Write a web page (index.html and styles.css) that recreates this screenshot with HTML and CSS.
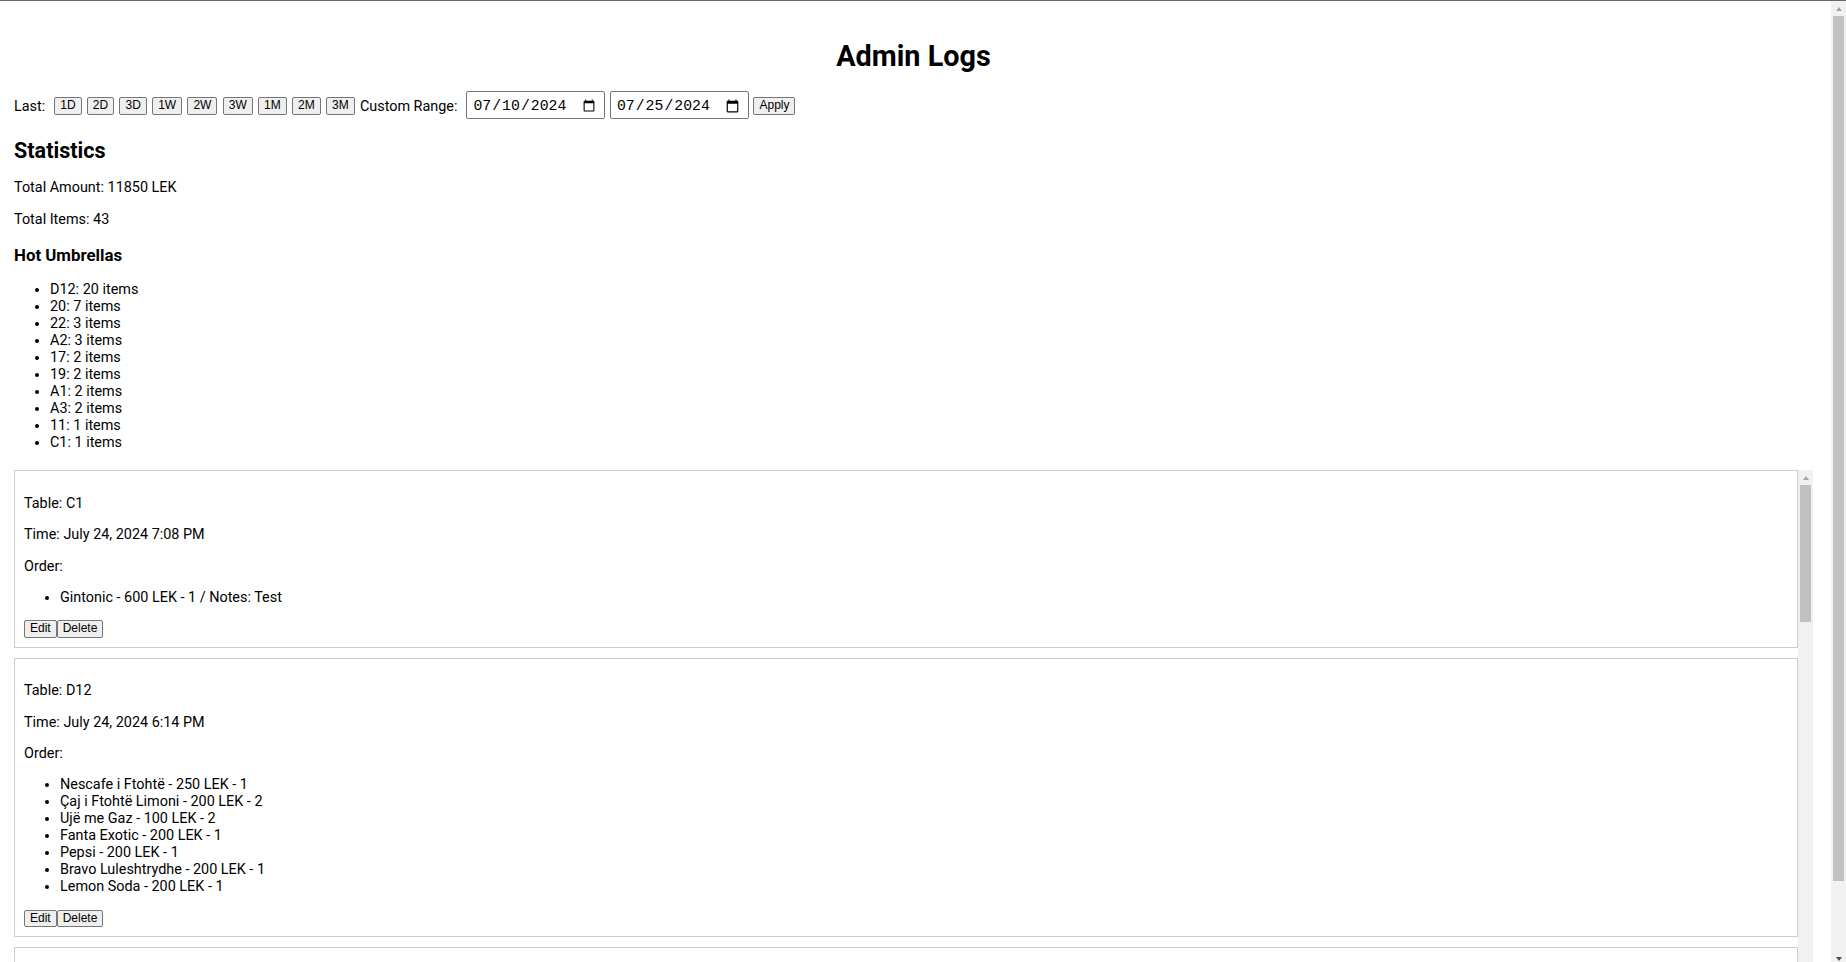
FILE: index.html
```html
<!DOCTYPE html>
<html lang="en">
<head>
<meta charset="utf-8">
<title>Admin Logs</title>
<link rel="stylesheet" href="styles.css">
</head>
<body>
  <main class="page">
    <h1 class="page-title">Admin Logs</h1>

    <div class="filters">
      <span class="filter-label">Last:</span>
      <button class="btn">1D</button>
      <button class="btn">2D</button>
      <button class="btn">3D</button>
      <button class="btn">1W</button>
      <button class="btn">2W</button>
      <button class="btn">3W</button>
      <button class="btn">1M</button>
      <button class="btn">2M</button>
      <button class="btn">3M</button>
      <span class="filter-label">Custom Range:</span>
      <input class="date-input" type="date" value="2024-07-10">
      <input class="date-input" type="date" value="2024-07-25">
      <button class="btn">Apply</button>
    </div>

    <section class="stats">
      <h2 class="stats-title">Statistics</h2>
      <p>Total Amount: 11850 LEK</p>
      <p>Total Items: 43</p>
      <h3>Hot Umbrellas</h3>
      <ul>
        <li>D12: 20 items</li>
        <li>20: 7 items</li>
        <li>22: 3 items</li>
        <li>A2: 3 items</li>
        <li>17: 2 items</li>
        <li>19: 2 items</li>
        <li>A1: 2 items</li>
        <li>A3: 2 items</li>
        <li>11: 1 items</li>
        <li>C1: 1 items</li>
      </ul>
    </section>

    <div class="log-list">
      <div class="log-cards">
        <div class="log-card">
          <p>Table: C1</p>
          <p>Time: July 24, 2024 7:08 PM</p>
          <p>Order:</p>
          <ul>
            <li>Gintonic - 600 LEK - 1 / Notes: Test</li>
          </ul>
          <div class="card-actions"><button class="btn">Edit</button><button class="btn">Delete</button></div>
        </div>

        <div class="log-card">
          <p>Table: D12</p>
          <p>Time: July 24, 2024 6:14 PM</p>
          <p>Order:</p>
          <ul>
            <li>Nescafe i Ftohtë - 250 LEK - 1</li>
            <li>Çaj i Ftohtë Limoni - 200 LEK - 2</li>
            <li>Ujë me Gaz - 100 LEK - 2</li>
            <li>Fanta Exotic - 200 LEK - 1</li>
            <li>Pepsi - 200 LEK - 1</li>
            <li>Bravo Luleshtrydhe - 200 LEK - 1</li>
            <li>Lemon Soda - 200 LEK - 1</li>
          </ul>
          <div class="card-actions"><button class="btn">Edit</button><button class="btn">Delete</button></div>
        </div>

        <div class="log-card">
          <p>Table: 20</p>
          <p>Time: July 24, 2024 5:47 PM</p>
          <p>Order:</p>
          <ul>
            <li>Espresso - 100 LEK - 3</li>
            <li>Ujë - 50 LEK - 2</li>
          </ul>
          <div class="card-actions"><button class="btn">Edit</button><button class="btn">Delete</button></div>
        </div>
      </div>

      <div class="scrollbar" aria-hidden="true">
        <div class="sb-arrow sb-up"></div>
        <div class="sb-track"><div class="sb-thumb" style="height: 137px"></div></div>
        <div class="sb-arrow sb-down"></div>
      </div>
    </div>
  </main>

  <div class="scrollbar page-scrollbar" aria-hidden="true">
    <div class="sb-arrow sb-up"></div>
    <div class="sb-track"><div class="sb-thumb" style="height: 865px"></div></div>
    <div class="sb-arrow sb-down"></div>
  </div>
</body>
</html>
```

FILE: styles.css
```css
html {
  border-top: 1px solid #5f6b73;
}

body {
  margin: 0;
  display: flex;
  height: calc(100vh - 1px);
  overflow: hidden;
  font-family: Roboto, "Liberation Sans", sans-serif;
  font-size: 14.4px;
  color: #000;
  background: #fff;
}

.page {
  flex: 1;
  min-width: 0;
  padding: 0 18px 0 14px;
}

/* classic scrollbar: arrow, track with thumb, arrow */
.scrollbar {
  flex: 0 0 15px;
  display: flex;
  flex-direction: column;
  background: #f1f1f1;
}

.sb-arrow {
  flex: 0 0 15px;
  display: flex;
  justify-content: center;
  box-sizing: border-box;
}

.sb-up {
  padding-top: 6px;
}

.sb-down {
  padding-top: 10px;
}

.sb-up::before,
.sb-down::before {
  content: "";
  width: 0;
  height: 0;
  border-left: 3.5px solid transparent;
  border-right: 3.5px solid transparent;
}

.sb-up::before {
  border-bottom: 4px solid #a3a3a3;
}

.sb-down::before {
  border-top: 4px solid #505050;
}

.sb-track {
  flex: 1;
  min-height: 0;
  overflow: hidden;
}

.sb-thumb {
  margin: 0 2px;
  background: #c1c1c1;
}

.page-title {
  text-align: center;
  font-size: 2em;
  margin: 37.8px 0 18.5px;
}

/* quick range + custom range row */
.filters {
  display: flex;
  align-items: flex-end;
  height: 28px;
}

.filter-label {
  margin-right: 9px;
  margin-bottom: 4.5px;
}

.filters .btn {
  margin-right: 5.3px;
  margin-bottom: 4.5px;
}

.date-input {
  box-sizing: border-box;
  width: 139px;
  height: 28px;
  margin-right: 4.5px;
  padding: 2px 6px 0 5px;
  font-family: "Liberation Mono", monospace;
  font-size: 14.8px;
  color: #000;
  background: #fff;
  border: 1px solid #767676;
  border-radius: 2px;
}

.btn {
  font-family: "Liberation Sans", Arial, sans-serif;
  font-size: 12px;
  line-height: 13.4px;
  padding: 1px 5px;
  color: #000;
  background: #efefef;
  border: 1px solid #767676;
  border-radius: 2px;
  margin: 0;
}

.stats-title {
  font-size: 1.5em;
  margin: 18.3px 0 16.8px;
}

.stats p {
  margin: 14.4px 0;
}

.stats h3 {
  font-size: 1.17em;
  margin: 1em 0;
}

ul {
  margin: 14.4px 0;
  padding-left: 36px;
}

.log-list {
  margin-top: 19px;
  height: 500px;
  display: flex;
}

.log-cards {
  flex: 1;
  min-width: 0;
  overflow: hidden;
}

.log-card {
  border: 1px solid #ccc;
  padding: 9px;
  margin-bottom: 10px;
}

.log-card p {
  margin: 14.4px 0;
}

.card-actions {
  display: flex;
  margin-top: 1px;
}
```
